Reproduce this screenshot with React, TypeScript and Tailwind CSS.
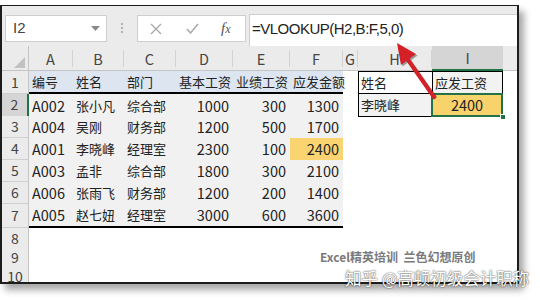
import React from 'react';

const cols = 'grid grid-cols-[27px_44px_51px_52px_57px_57px_53px_15px_74px_71px_14px]';
const cjk = "font-['Noto_Sans_CJK_SC',sans-serif]";

const letters = ['A', 'B', 'C', 'D', 'E', 'F', 'G', 'H', 'I', ''];

const rows: (string | number)[][] = [
  ['A002', '张小凡', '综合部', 1000, 300, 1300],
  ['A004', '吴刚', '财务部', 1200, 500, 1700],
  ['A001', '李晓峰', '经理室', 2300, 100, 2400],
  ['A003', '孟非', '综合部', 1800, 300, 2100],
  ['A006', '张雨飞', '财务部', 1200, 200, 1400],
  ['A005', '赵七妞', '经理室', 3000, 600, 3600],
];

const isLatin = (s: string) => /^[\x00-\x7f]+$/.test(s);

function Txt({ v }: { v: string | number }) {
  const s = String(v);
  return <span className={isLatin(s) ? 'text-[14.5px]' : 'text-[13px]'}>{s}</span>;
}

function RowHead({ n, active }: { n: number; active?: boolean }) {
  return (
    <div
      className={
        'flex items-center justify-center border-b border-[#d0d0d0] text-[14px] text-[#444] ' +
        (active ? 'bg-[#d5d5d5] border-r-2 border-r-[#217346]' : 'bg-[#ebebeb] border-r border-r-[#c4c4c4]')
      }
    >
      {n}
    </div>
  );
}

function Formula() {
  return (
    <div className="flex h-[40px] bg-[#ebebeb] items-start">
      {/* name box */}
      <div className="ml-[3px] mt-[9px] w-[102px] h-[27px] bg-white border border-[#cfcfcf] flex items-center justify-between pl-[7px] pr-[6px]">
        <span className="font-['Liberation_Sans',sans-serif] text-[15px] text-[#444]">I2</span>
        <svg width="9" height="6" viewBox="0 0 9 6">
          <polygon points="0,0 9,0 4.5,5" fill="#8a8a8a" />
        </svg>
      </div>
      <div className="w-[30px] h-full flex flex-col items-center justify-center gap-[2px] pt-[3px]">
        <span className="w-[2px] h-[2px] bg-[#b0b0b0]" />
        <span className="w-[2px] h-[2px] bg-[#b0b0b0]" />
        <span className="w-[2px] h-[2px] bg-[#b0b0b0]" />
      </div>
      {/* fx box */}
      <div className="mt-[9px] w-[109px] h-[27px] bg-white border border-[#cfcfcf] flex items-center">
        <svg className="ml-[12px]" width="12" height="12" viewBox="0 0 12 12">
          <path d="M1 1 L11 11 M11 1 L1 11" stroke="#a8a8a8" strokeWidth="1.3" />
        </svg>
        <svg className="ml-[24px]" width="13" height="11" viewBox="0 0 13 11">
          <path d="M1 6 L4.5 10 L12 1" stroke="#a8a8a8" strokeWidth="1.5" fill="none" />
        </svg>
        <span className="ml-[22px] font-['Liberation_Serif',serif] italic text-[15px] text-[#555]">
          f<span className="text-[12px]">x</span>
        </span>
      </div>
      <div className="ml-[3px] mt-[8px] flex-1 h-[32px] bg-white border-t border-l border-[#cfcfcf] flex items-center pl-[2px] pb-[3px]">
        <span className="font-['Liberation_Sans',sans-serif] text-[15px] tracking-[-0.5px] text-[#222]">
          =VLOOKUP(H2,B:F,5,0)
        </span>
      </div>
    </div>
  );
}

function ColHeader() {
  return (
    <div className={cols + ' h-[25px] bg-[#ebebeb] border-b border-[#c4c4c4]'}>
      <div className="relative border-r border-[#c4c4c4]">
        <svg className="absolute right-[3px] bottom-[3px]" width="11" height="11" viewBox="0 0 11 11">
          <polygon points="11,0 11,11 0,11" fill="#c2c2c2" />
        </svg>
      </div>
      {letters.map((l, i) => (
        <div
          key={i}
          className={
            'flex items-center justify-center text-[14.5px] text-[#444] ' +
            (l === 'I'
              ? 'bg-[#d5d5d5] border-b-2 border-[#217346]'
              : i < 9
              ? 'border-r border-[#d2d2d2] my-[4px] h-[17px]'
              : '')
          }
        >
          {l}
        </div>
      ))}
    </div>
  );
}

function Sheet() {
  return (
    <div className={cjk + ' text-[#222]'}>
      <ColHeader />
      {/* row 1 */}
      <div className={cols + ' h-[23px]'}>
        <RowHead n={1} />
        {['编号', '姓名', '部门', '基本工资', '业绩工资', '应发金额'].map((t, i) => (
          <div
            key={i}
            className={
              'bg-[#dde6f0] border-b-2 border-black flex items-center whitespace-nowrap ' +
              (i < 3 ? 'pl-[3px]' : 'pl-[3px]')
            }
          >
            <Txt v={t} />
          </div>
        ))}
        <div />
        <div className="bg-white border-t border-l border-b border-black flex items-center pl-[2px]">
          <Txt v="姓名" />
        </div>
        <div className="bg-[#f2f2f2] border-t border-l border-r border-b border-black flex items-center pl-[2px]">
          <Txt v="应发工资" />
        </div>
        <div />
      </div>
      {/* rows 2-7 */}
      {rows.map((r, ri) => (
        <div key={ri} className={cols + (ri === 5 ? ' h-[24px]' : ' h-[22px]')}>
          <RowHead n={ri + 2} active={ri === 0} />
          {r.map((v, ci) => (
            <div
              key={ci}
              className={
                'flex items-center whitespace-nowrap ' +
                (ci < 3 ? 'justify-start pl-[3px] ' : 'justify-end pr-[4px] ') +
                (ri === 2 && ci === 5 ? 'bg-[#f9d470] ' : 'bg-[#f1f1f1] ') +
                (ri === 5 ? 'border-b-2 border-black' : '')
              }
            >
              <Txt v={v} />
            </div>
          ))}
          <div />
          {ri === 0 ? (
            <>
              <div className="bg-[#f2f2f2] border-l border-b border-black flex items-center pl-[2px]">
                <Txt v="李晓峰" />
              </div>
              <div className="relative bg-[#f8d26a] border-r border-b border-black flex items-center justify-center">
                <Txt v={2400} />
                <div className="absolute -left-[1px] -top-[1px] -right-[1px] -bottom-[1px] border-2 border-[#217346]" />
                <div className="absolute -right-[4px] -bottom-[4px] w-[6px] h-[6px] bg-[#217346] border border-white" />
              </div>
            </>
          ) : (
            <>
              <div />
              <div />
            </>
          )}
          <div />
        </div>
      ))}
      {[8, 9, 10].map((n) => (
        <div key={n} className={cols + ' h-[19px]'}>
          <RowHead n={n} />
        </div>
      ))}
    </div>
  );
}

export default function App() {
  return (
    <div className="relative w-[540px] h-[304px] bg-white overflow-hidden pt-[5px]">
      <div className="w-[519px] h-[279px] border-2 border-t-[1.5px] border-[#1c1c1c] bg-white overflow-hidden shadow-[5px_6px_7px_rgba(0,0,0,0.35)]">
        <Formula />
        <Sheet />
      </div>

      {/* red arrow */}
      <svg className="absolute left-0 top-0 pointer-events-none" width="540" height="304" viewBox="0 0 540 304">
        <g transform="translate(1.5,1.5)" opacity="0.35">
          <line x1="434" y1="97" x2="406" y2="57" stroke="#000" strokeWidth="4" />
          <polygon points="397,43 416,54 401,65" fill="#000" />
        </g>
        <line x1="434" y1="97" x2="406" y2="57" stroke="#d42027" strokeWidth="4" strokeLinecap="round" />
        <polygon points="397,43 416,54 401,65" fill="#d42027" />
      </svg>

      {/* watermarks */}
      <div className="absolute left-[320px] top-[249px] font-['Noto_Sans_CJK_SC',sans-serif] font-bold text-[12px] leading-[16px] text-[#7a7a7a] whitespace-nowrap">
        Excel精英培训&nbsp;&nbsp;兰色幻想原创
      </div>
      <div className="absolute left-[345px] top-[267px] font-['Noto_Sans_CJK_SC',sans-serif] text-[16.5px] leading-[22px] text-white whitespace-nowrap [text-shadow:0_0_2px_rgba(0,0,0,0.55),0_0_1px_rgba(0,0,0,0.6)]">
        知乎 @高顿初级会计职称
      </div>
    </div>
  );
}
